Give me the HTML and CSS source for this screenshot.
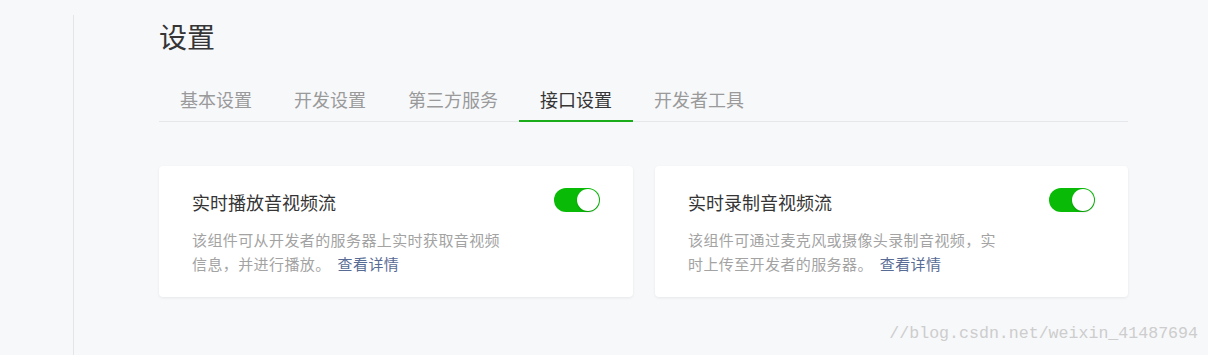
FILE: index.html
```html
<!DOCTYPE html>
<html lang="zh-CN">
<head>
  <meta charset="UTF-8" />
  <meta name="viewport" content="width=device-width, initial-scale=1.0" />
  <title>设置</title>
  <link rel="stylesheet" href="styles.css">
</head>
<body>

  <div class="page">
    <div class="side"></div>

    <div class="main">
      <h1 class="title">设置</h1>

      <ul class="tabs">
        <li class="tab">基本设置</li>
        <li class="tab">开发设置</li>
        <li class="tab">第三方服务</li>
        <li class="tab active">接口设置</li>
        <li class="tab">开发者工具</li>
      </ul>

      <div class="cards">
        <div class="card">
          <div class="card-head">
            <h3 class="card-title">实时播放音视频流</h3>
            <span class="switch on"></span>
          </div>
          <p class="card-desc">该组件可从开发者的服务器上实时获取音视频信息，并进行播放。<a class="more" href="#">查看详情</a></p>
        </div>

        <div class="card">
          <div class="card-head">
            <h3 class="card-title">实时录制音视频流</h3>
            <span class="switch on"></span>
          </div>
          <p class="card-desc">该组件可通过麦克风或摄像头录制音视频，实时上传至开发者的服务器。<a class="more" href="#">查看详情</a></p>
        </div>
      </div>
    </div>
  </div>

  <div class="watermark">//blog.csdn.net/weixin_41487694</div>

</body>
</html>
```

FILE: styles.css
```css
html, body {
  margin: 0;
  padding: 0;
}

body {
  font-family: "Noto Sans CJK SC", "Noto Sans", sans-serif;
  background-color: #f7f8fa;
  color: #353535;
  position: relative;
  min-height: 100vh;
}

.page {
  display: flex;
  min-height: 100vh;
}

.side {
  width: 73px;
  margin-top: 15px;
  border-right: 1px solid #e4e5e9;
  flex-shrink: 0;
}

.main {
  width: 969px;
  padding-left: 85px;
  padding-top: 16px;
}

.title {
  margin: 0;
  font-size: 28px;
  line-height: 40px;
  font-weight: normal;
  color: #353535;
}

.tabs {
  list-style: none;
  margin: 31px 0 0;
  padding: 0;
  display: flex;
  border-bottom: 1px solid #e4e8eb;
}

.tab {
  font-size: 18px;
  line-height: 24px;
  padding: 0 21px 9px;
  margin-bottom: -1px;
  border-bottom: 2px solid transparent;
  color: #9a9a9a;
}

.tab.active {
  color: #353535;
  border-bottom-color: #1aad19;
}

.cards {
  margin-top: 44px;
  display: grid;
  grid-template-columns: 474px 473px;
  gap: 22px;
}

.card {
  background-color: #fff;
  border-radius: 4px;
  box-shadow: 0 1px 3px rgba(0,0,0,0.07);
  padding: 24px 33px 21px;
}

.card-head {
  display: flex;
  justify-content: space-between;
  align-items: flex-start;
}

.card-title {
  margin: 0;
  font-size: 18px;
  line-height: 24px;
  font-weight: normal;
  color: #353535;
}

.switch {
  display: block;
  width: 46px;
  height: 24px;
  margin-top: -2px;
  border-radius: 12px;
  background-color: #09bb07;
  position: relative;
}

.switch::after {
  content: "";
  position: absolute;
  top: 1px;
  right: 1px;
  width: 22px;
  height: 22px;
  border-radius: 50%;
  background-color: #fff;
  box-shadow: 0 1px 2px rgba(0,0,0,0.2);
}

.card-desc {
  margin: 14px 0 0;
  max-width: 314px;
  font-size: 15px;
  letter-spacing: 0.4px;
  line-height: 24px;
  color: #a3a3a3;
}

.more {
  margin-left: 7px;
  color: #576b95;
  text-decoration: none;
}

.watermark {
  position: absolute;
  right: 10px;
  bottom: 11px;
  font-family: "Liberation Mono", monospace;
  font-size: 16.6px;
  line-height: 20px;
  color: #cdcdcd;
}
```
